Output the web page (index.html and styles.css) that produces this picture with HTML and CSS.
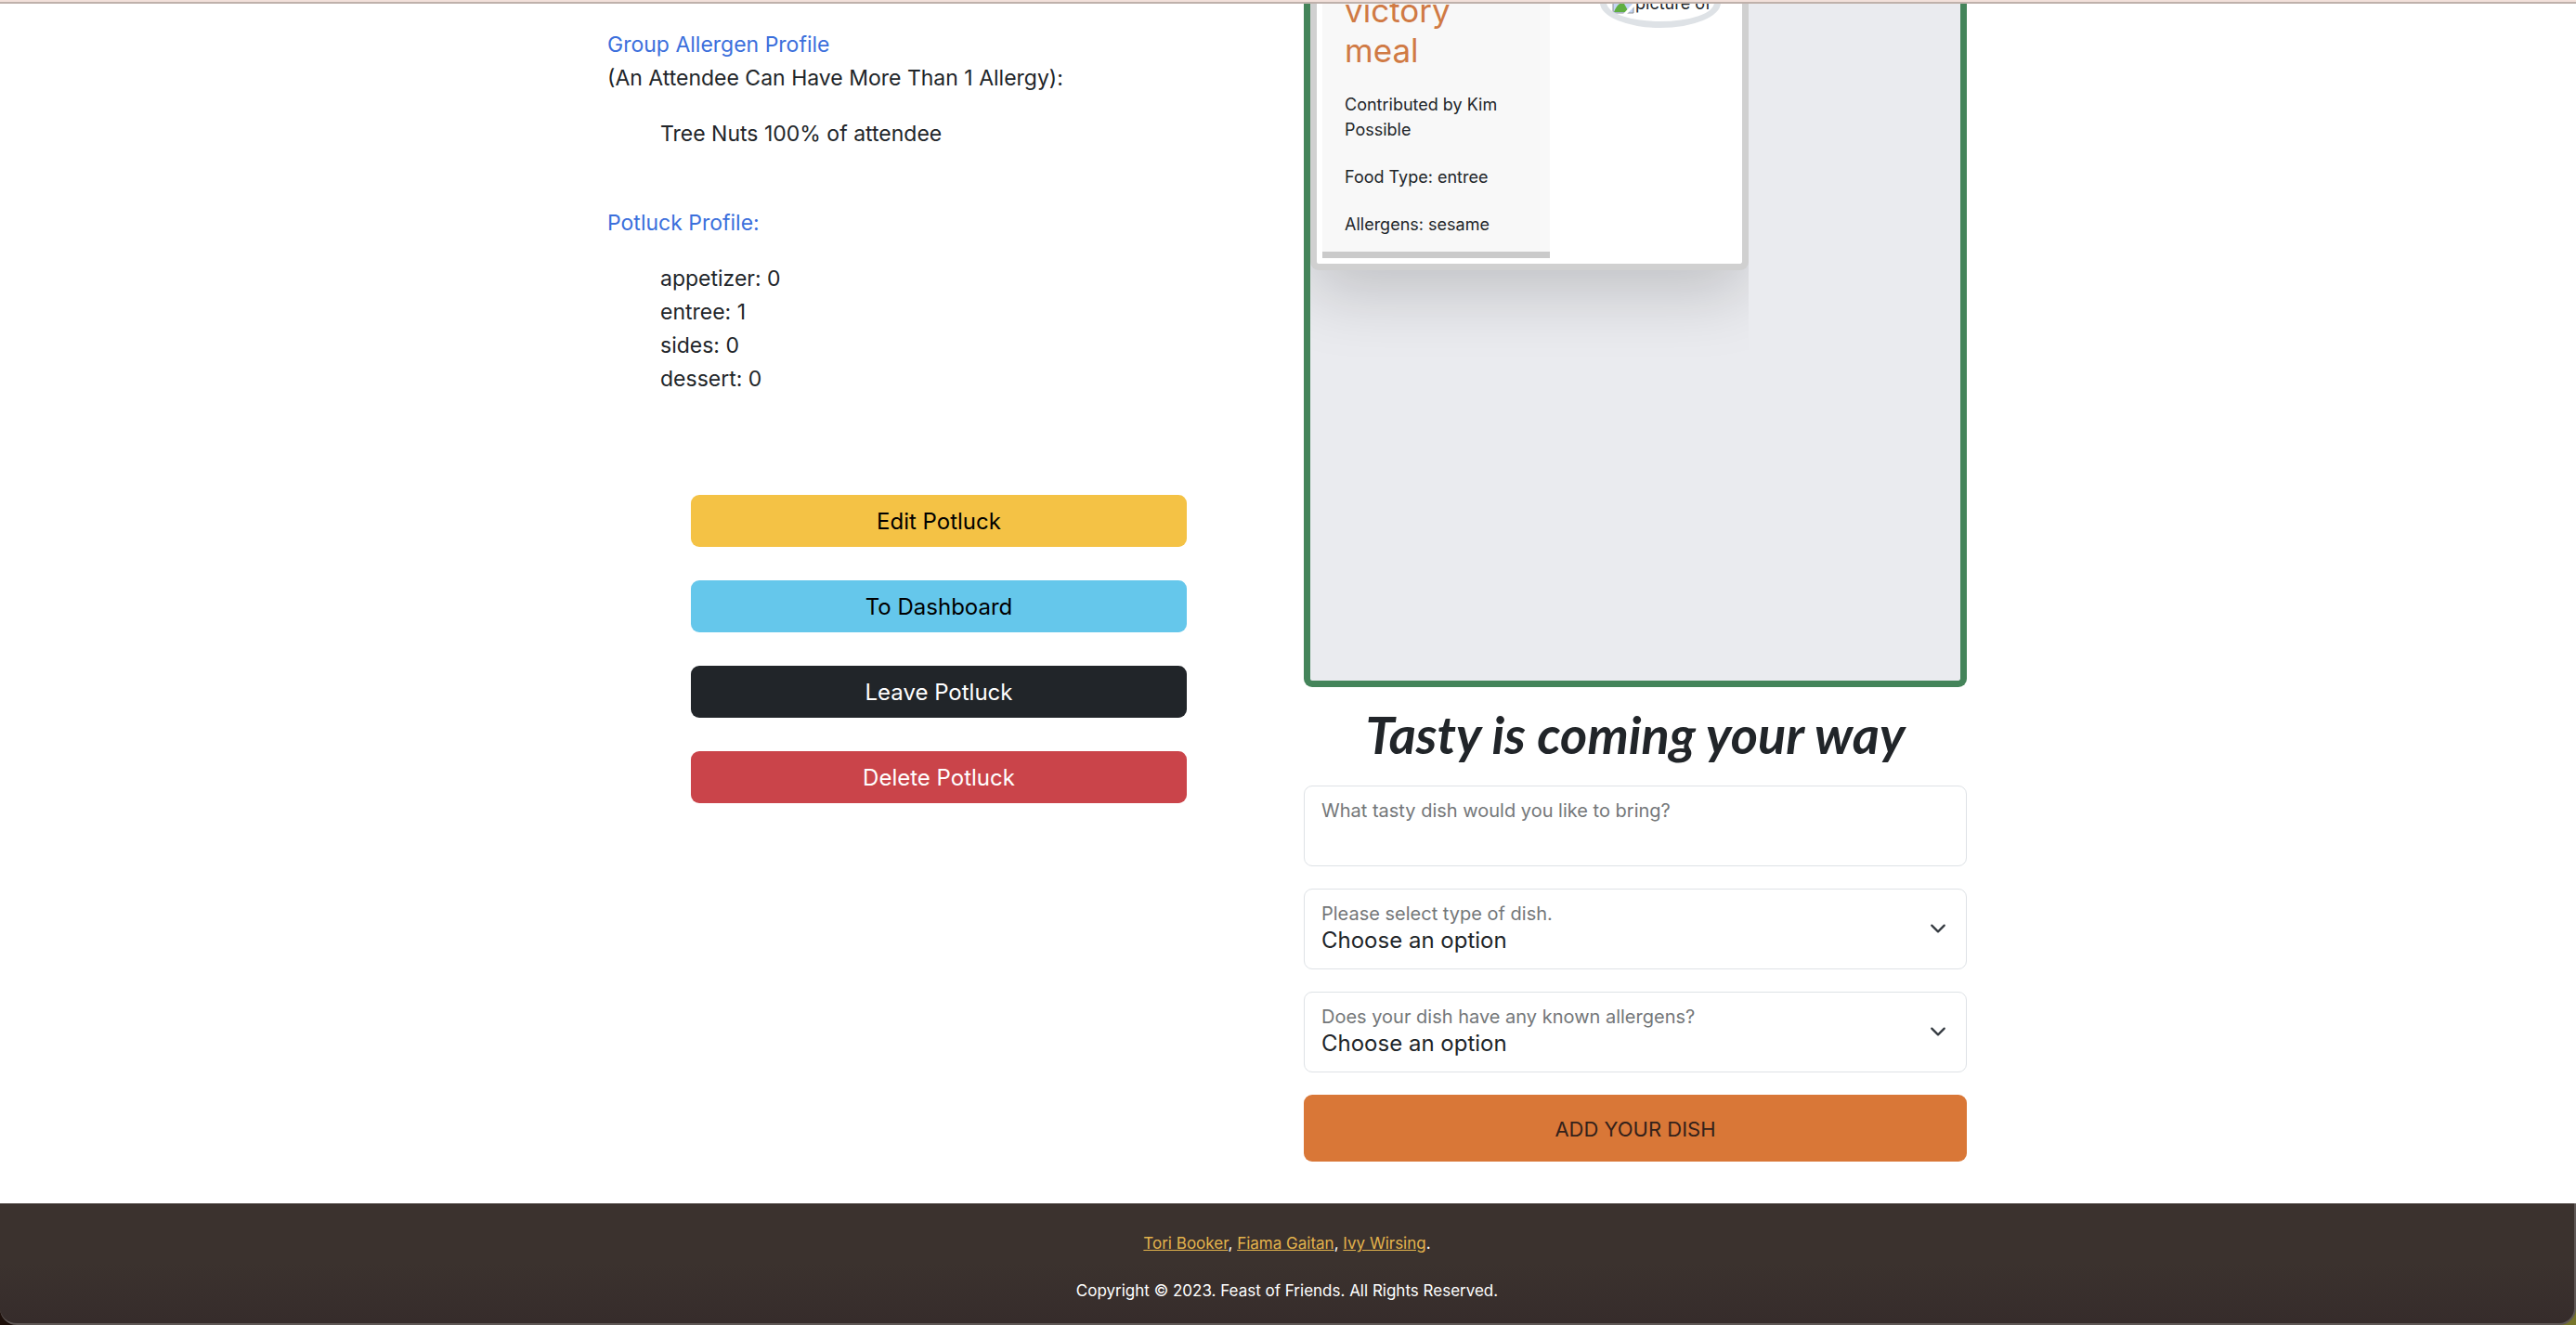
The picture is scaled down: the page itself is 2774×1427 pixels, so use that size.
FILE: index.html
```html
<!DOCTYPE html>
<html lang="en">
<head>
<meta charset="utf-8">
<meta name="viewport" content="width=device-width, initial-scale=1">
<title>Feast of Friends</title>
<link rel="stylesheet" href="styles.css">
</head>
<body>
<div class="app">
  <div class="nav-edge"></div>
  <div class="page">
  <main class="potluck">
    <section class="details">
      <h2 class="profile-title">Group Allergen Profile</h2>
      <p class="profile-note">(An Attendee Can Have More Than 1 Allergy):</p>
      <ul class="profile-list">
        <li>Tree Nuts 100% of attendee</li>
      </ul>
      <h2 class="profile-title profile-title-next">Potluck Profile:</h2>
      <ul class="profile-list">
        <li>appetizer: 0</li>
        <li>entree: 1</li>
        <li>sides: 0</li>
        <li>dessert: 0</li>
      </ul>
      <div class="actions">
        <button class="btn btn-warning" type="button">Edit Potluck</button>
        <button class="btn btn-info" type="button">To Dashboard</button>
        <button class="btn btn-dark" type="button">Leave Potluck</button>
        <button class="btn btn-danger" type="button">Delete Potluck</button>
      </div>
    </section>
    <section class="dishes">
      <div class="dish-list">
        <div class="dish-wrap">
          <article class="dish">
            <div class="dish-info">
              <h3 class="dish-name">victory meal</h3>
              <p>Contributed by Kim Possible</p>
              <p>Food Type: entree</p>
              <p>Allergens: sesame</p>
            </div>
            <div class="dish-photo">
              <svg width="24" height="24" viewBox="0 0 24 24" aria-hidden="true">
                <path d="M1 1H16L23 8V23H1Z" fill="#c4d5f3" stroke="#8d9196" stroke-width="1"/>
                <path d="M2 22C5 14 9 11 13 13L18 22Z" fill="#5fae41"/>
                <path d="M12 24L24 11V16L16 24Z" fill="#fff"/>
              </svg>
              <span>picture of</span>
            </div>
          </article>
        </div>
      </div>
      <h2 class="form-title">Tasty is coming your way</h2>
      <form class="dish-form">
        <div class="field">
          <input class="control" id="dish" type="text">
          <label for="dish">What tasty dish would you like to bring?</label>
        </div>
        <div class="field">
          <select class="control" id="type"><option>Choose an option</option></select>
          <label for="type">Please select type of dish.</label>
          <svg class="chevron" viewBox="0 0 16 16" aria-hidden="true"><path d="M2 5l6 6 6-6"/></svg>
        </div>
        <div class="field">
          <select class="control" id="allergens"><option>Choose an option</option></select>
          <label for="allergens">Does your dish have any known allergens?</label>
          <svg class="chevron" viewBox="0 0 16 16" aria-hidden="true"><path d="M2 5l6 6 6-6"/></svg>
        </div>
        <button class="btn btn-add" type="submit">ADD YOUR DISH</button>
      </form>
    </section>
  </main>
  </div>
  <footer class="footer-frame">
    <div class="footer">
      <p><a href="#">Tori Booker</a>, <a href="#">Fiama Gaitan</a>, <a href="#">Ivy Wirsing</a>.</p>
      <p>Copyright © 2023. Feast of Friends. All Rights Reserved.</p>
    </div>
  </footer>
</div>
</body>
</html>
```
FILE: styles.css
```css
* { box-sizing: border-box; }

body {
  margin: 0;
  background: #fff;
  color: #212529;
  font: 400 23px/36px Inter, "Liberation Sans", sans-serif;
}

h2, h3, p, ul { margin: 0; padding: 0; font-weight: 400; }
ul { list-style: none; }

.app {
  display: flex;
  flex-direction: column;
  min-height: 100vh;
}

.nav-edge {
  height: 4px;
  background: #f2e0da;
  border-bottom: 2px solid #bfb1ab;
}

.page {
  flex: 1;
  border-right: 2px solid #fff;
}

.potluck {
  display: grid;
  grid-template-columns: 1fr 1fr;
  gap: 36px;
  width: 100%;
  max-width: 1464px;
  margin: 0 auto;
  padding-bottom: 45px;
}

.details { padding-top: 26px; }

.profile-title {
  color: #3b6fdc;
  font-size: 23px;
}
.profile-title-next { margin-top: 60px; }
.profile-list { margin-top: 24px; padding-left: 57px; }

.actions {
  display: grid;
  gap: 36px;
  margin-top: 107px;
  padding: 0 90px;
}

.btn {
  height: 56px;
  padding: 2px 0 0;
  border: 0;
  border-radius: 9px;
  font: inherit;
  font-size: 24px;
}
.btn-warning { background: #f4c245; color: #000; }
.btn-info { background: #65c7eb; color: #000; }
.btn-dark { background: #212529; color: #fff; }
.btn-danger { background: #ca444a; color: #fff; }
.btn-add { height: 72px; background: #d97737; color: #33211a; font-size: 22px; }

.dish-list {
  height: 736px;
  overflow: hidden;
  background: #eaebef;
  border: 7px solid #44845a;
  border-top: 0;
  border-radius: 0 0 9px 9px;
}

.dish-wrap {
  width: 472px;
  max-width: 100%;
  margin-top: -14px;
  padding-bottom: 110px;
  overflow: hidden;
}

.dish {
  display: flex;
  padding: 0 6px 6px;
  background: #fff;
  border: 7px solid #d0d0d0;
  border-top: 0;
  border-radius: 0 0 9px 9px;
  box-shadow: 0 24px 72px rgba(0, 0, 0, .18);
}

.dish-info {
  flex: 0 0 245px;
  padding: 0 24px 16px;
  background: #f8f8f8;
  border-bottom: 7px solid #cacaca;
  font-size: 18px;
  line-height: 27px;
}
.dish-info p { margin-top: 24px; }
.dish-info .dish-name + p { margin-top: 23px; }
.dish-name {
  color: #d07a44;
  font-size: 35px;
  line-height: 43px;
}

.dish-photo {
  display: flex;
  align-items: center;
  gap: 1px;
  width: 130px;
  height: 54px;
  margin: -14px 0 0 54px;
  padding: 0 6px;
  overflow: hidden;
  border: 7px solid #dee2e6;
  border-radius: 50%;
  font-size: 18px;
  line-height: 27px;
  white-space: nowrap;
}
.dish-photo svg { flex: none; }

.form-title {
  height: 106px;
  font: italic 700 56px/102px Lato, "Liberation Sans", cursive;
  text-align: center;
}

.dish-form {
  display: grid;
  gap: 24px;
}

.field { position: relative; }
.control {
  display: block;
  width: 100%;
  height: 87px;
  padding: 38px 18px 14px;
  background: #fff;
  border: 1px solid #dee2e6;
  border-radius: 9px;
  color: #212529;
  font: inherit;
  font-size: 24px;
  line-height: 33px;
  appearance: none;
}
.field label {
  position: absolute;
  top: 15px;
  left: 19px;
  color: #747779;
  font-size: 20px;
  line-height: 24px;
}
.chevron {
  position: absolute;
  top: 34px;
  right: 22px;
  width: 18px;
  height: 18px;
  fill: none;
  stroke: #343a40;
  stroke-width: 2;
  stroke-linecap: round;
  stroke-linejoin: round;
  pointer-events: none;
}

.footer-frame { background: linear-gradient(90deg, #1d0f0a 50%, #77752a 50%); }
.footer {
  display: grid;
  gap: 24px;
  padding: 30px 0 21px;
  background: linear-gradient(#3b322e 50%, #362c2b);
  border-right: 2px solid #5f5856;
  border-bottom: 2px solid #5f5856;
  border-radius: 0 0 18px 18px;
  color: #fff;
  font-size: 17px;
  line-height: 27px;
  text-align: center;
}
.footer a { color: #e3b34c; }
```
